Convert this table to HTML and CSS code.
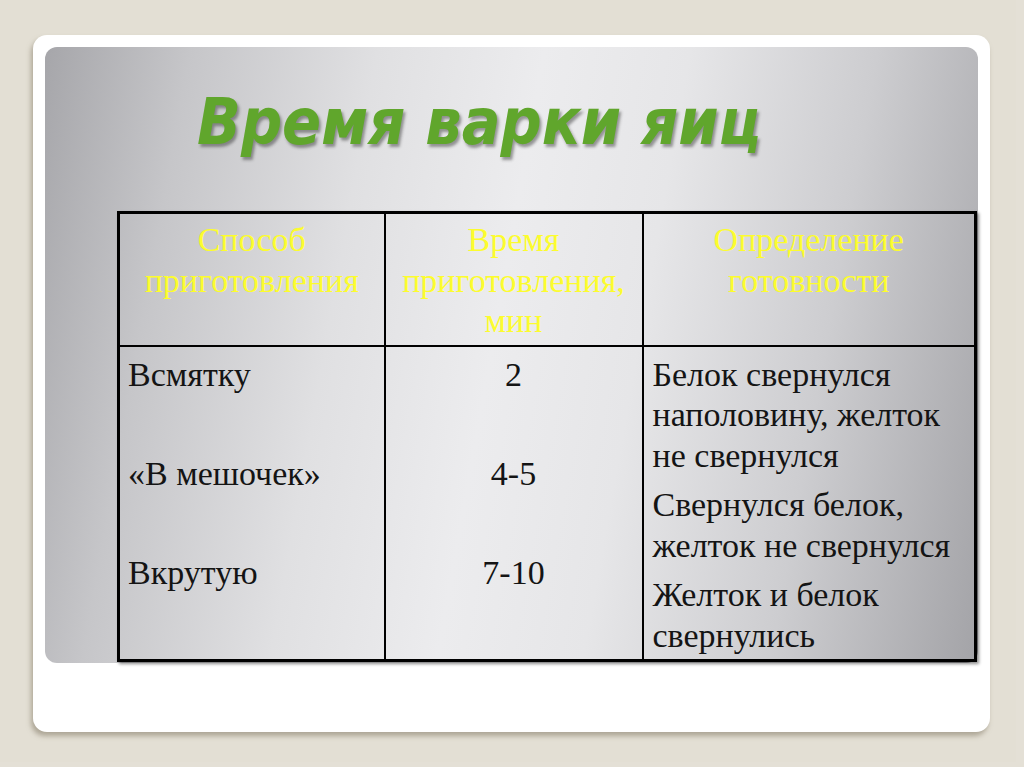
FILE: index.html
```html
<!DOCTYPE html>
<html lang="ru">
<head>
<meta charset="utf-8">
<title>Время варки яиц</title>
<link rel="stylesheet" href="styles.css">
</head>
<body>
<div class="stage">
  <div class="card">
    <div class="panel">
      <h1 class="title">Время варки яиц</h1>
      <table class="eggs">
        <colgroup>
          <col class="c1"><col class="c2"><col class="c3">
        </colgroup>
        <thead>
          <tr>
            <th>Способ<br>приготовления</th>
            <th>Время<br>приготовления,<br>мин</th>
            <th>Определение<br>готовности</th>
          </tr>
        </thead>
        <tbody>
          <tr>
            <td class="left">
              <p class="item">Всмятку</p>
              <p class="item">«В мешочек»</p>
              <p class="item">Вкрутую</p>
            </td>
            <td class="mid">
              <p class="item">2</p>
              <p class="item">4-5</p>
              <p class="item">7-10</p>
            </td>
            <td class="right">
              <p class="para">Белок свернулся наполовину, желток не свернулся</p>
              <p class="para">Свернулся белок, желток не свернулся</p>
              <p class="para">Желток и белок свернулись</p>
            </td>
          </tr>
        </tbody>
      </table>
    </div>
  </div>
</div>
</body>
</html>
```

FILE: styles.css
```css
html, body {
  margin: 0;
  padding: 0;
}
body {
  width: 1024px;
  height: 767px;
  overflow: hidden;
  background: #e4e0d6;
}
.stage {
  width: 1016px;
  height: 762px;
  padding: 35px 0 0 33px;
  box-sizing: border-box;
  background: #e3dfd4;
}
.card {
  width: 957px;
  height: 697px;
  box-sizing: border-box;
  padding: 12px;
  background: #ffffff;
  border-radius: 14px;
  box-shadow: -2px 4px 5px rgba(130, 120, 100, 0.55);
}
.panel {
  width: 933px;
  height: 616px;
  box-sizing: border-box;
  border-radius: 12px;
  padding: 0 0 0 72px;
  display: flex;
  flex-direction: column;
  background: linear-gradient(100deg, #a6a6aa 0%, #c6c6c9 14%, #e0e0e2 32%, #ececee 48%, #e6e6e8 62%, #cdcdd0 80%, #a3a3a7 100%);
}
.title {
  margin: 40px 0 0 80px;
  font-family: "DejaVu Sans Condensed", "DejaVu Sans", sans-serif;
  font-stretch: condensed;
  font-weight: bold;
  font-style: italic;
  font-size: 64px;
  line-height: 70px;
  color: #60a62c;
  text-shadow: 2px 3px 3px rgba(40, 40, 40, 0.45);
  white-space: nowrap;
}
.eggs {
  margin-top: 54px;
  width: 857px;
  border-collapse: collapse;
  table-layout: fixed;
  font-family: "Liberation Serif", "Times New Roman", serif;
  font-size: 34px;
  line-height: 40.5px;
  color: #141414;
  border: 3px solid #000;
  box-shadow: 2px 2px 3px rgba(0, 0, 0, 0.45);
}
.c1 { width: 266px; }
.c2 { width: 258px; }
.c3 { width: 333px; }
.eggs th, .eggs td {
  border: 2px solid #000;
  vertical-align: top;
  padding: 0;
}
.eggs th {
  height: 133px;
  box-sizing: border-box;
  padding-top: 6px;
  font-weight: normal;
  color: #fcfc2e;
  text-align: center;
}
.eggs td {
  height: 315px;
  box-sizing: border-box;
  padding-top: 8px;
}
.eggs p {
  margin: 0;
}
.eggs td.left {
  padding-left: 8px;
}
.eggs td.mid {
  text-align: center;
}
.eggs td.right {
  padding-left: 9px;
  padding-right: 2px;
}
.eggs .item + .item {
  margin-top: 58.5px;
}
.eggs .para + .para {
  margin-top: 9px;
}
```
